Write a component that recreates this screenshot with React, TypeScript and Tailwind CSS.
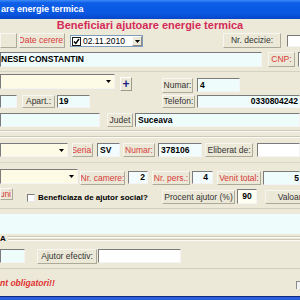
import React from "react";

const lblBase =
  "flex items-center justify-center border border-t-[#f7f6f0] border-l-[#f7f6f0] border-r-[#aeaa99] border-b-[#aeaa99] bg-[#ebe8d7] text-[8.5px] leading-none whitespace-nowrap overflow-hidden";
const inBase =
  "flex items-center border border-t-[#7b7b7b] border-l-[#7b7b7b] border-r-[#f4f4f4] border-b-[#f4f4f4] text-[8.5px] leading-none whitespace-nowrap overflow-hidden text-black";

function Lbl({ c, red, children }: { c: string; red?: boolean; children?: React.ReactNode }) {
  return <div className={`${lblBase} ${red ? "text-[#d83a3a]" : "text-[#333333]"} ${c}`}>{children}</div>;
}

function Inp({ c, children }: { c: string; children?: React.ReactNode }) {
  return <div className={`${inBase} ${c}`}>{children}</div>;
}

function Combo({ c }: { c: string }) {
  return (
    <div className={`${inBase} bg-[#fdfbe6] justify-end pr-[3px] ${c}`}>
      <svg width="5" height="3" viewBox="0 0 5 3">
        <path d="M0 0 L5 0 L2.5 3 Z" fill="#000" />
      </svg>
    </div>
  );
}

function Line({ c }: { c: string }) {
  return <div className={`h-[2px] border-t border-t-[#cdc9b8] border-b border-b-[#fbfaf5] ${c}`} />;
}

export default function App() {
  return (
    <div className="w-[300px] h-[300px] overflow-hidden bg-[#ece9d8] relative font-['Liberation_Sans',Arial,sans-serif] flex flex-col">
      {/* title bar */}
      <div className="h-[19px] shrink-0 flex items-center pl-[1px] bg-[linear-gradient(to_bottom,#3d8bf7_0%,#0e5ee8_15%,#0a58e2_70%,#0746c8_100%)]">
        <span className="text-white font-bold text-[9px] leading-none">are energie termica</span>
      </div>
      {/* header */}
      <div className="h-[13px] shrink-0 flex items-center justify-center">
        <span className="text-[#d42b58] font-bold text-[11px] leading-none">Beneficiari ajutoare energie termica</span>
      </div>

      {/* row 2 */}
      <div className="flex items-start h-[15px] mt-[1px] shrink-0 *:shrink-0">
        <Lbl c="w-[17px] h-[15px]" />
        <Lbl c="ml-[2px] w-[46px] h-[15px]" red>
          Date cerere:
        </Lbl>
        <div className="ml-[5px] mt-[2px] w-[73px] h-[12px] flex items-center border border-[#7f9db9] bg-white">
          <div className="ml-[1px] w-[9px] h-[9px] border border-[#1c1c1c] bg-white flex items-center justify-center">
            <svg width="7" height="7" viewBox="0 0 7 7">
              <path d="M1 3.5 L2.8 5.5 L6 1" stroke="#000" strokeWidth="1.4" fill="none" />
            </svg>
          </div>
          <span className="ml-[2px] text-[8.5px] leading-none text-black">02.11.2010</span>
          <div className="ml-auto w-[10px] h-[10px] bg-[#ece9d8] border border-t-white border-l-white border-r-[#8a8a8a] border-b-[#8a8a8a] flex items-center justify-center">
            <svg width="5" height="3" viewBox="0 0 5 3">
              <path d="M0 0 L5 0 L2.5 3 Z" fill="#000" />
            </svg>
          </div>
        </div>
        <Lbl c="ml-[80px] w-[58px] h-[15px]">Nr. decizie:</Lbl>
        <Inp c="ml-[6px] mt-[2px] w-[20px] h-[12px] bg-white" />
      </div>

      {/* row 3 */}
      <div className="flex items-start h-[15px] mt-[4px] shrink-0 *:shrink-0">
        <Inp c="w-[262px] h-[15px] bg-[#effcfc] font-bold">NESEI CONSTANTIN</Inp>
        <Lbl c="ml-[6px] w-[27px] h-[15px]" red>
          CNP:
        </Lbl>
        <Inp c="ml-[3px] w-[10px] h-[15px] bg-white" />
      </div>

      <div className="h-px mt-[4px] bg-[#d6d2c2] shrink-0" />

      {/* row 4 */}
      <div className="flex items-start h-[20px] mt-[1px] shrink-0 *:shrink-0">
        <Combo c="w-[115px] h-[15px] mt-[1px]" />
        <div className="ml-[5px] mt-[4px] w-[12px] h-[14px] flex items-center justify-center border border-t-white border-l-white border-r-[#9d9a8a] border-b-[#9d9a8a] text-[#1e1e8a] font-bold text-[12px] leading-none">
          +
        </div>
        <Lbl c="ml-[30px] mt-[5px] w-[31px] h-[15px]">Numar:</Lbl>
        <Inp c="ml-[4px] mt-[5px] w-[43px] h-[14px] bg-[#effcfc] font-bold pl-[2px]">4</Inp>
      </div>

      {/* row 5 */}
      <div className="flex items-start h-[13px] mt-[2px] shrink-0 *:shrink-0">
        <Inp c="w-[17px] h-[13px] bg-[#effcfc]" />
        <Lbl c="ml-[5px] w-[33px] h-[13px]">Apart.:</Lbl>
        <Inp c="ml-[2px] w-[33px] h-[13px] bg-[#effcfc] font-bold pl-[1px]">19</Inp>
        <Lbl c="ml-[72px] w-[33px] h-[13px]">Telefon:</Lbl>
        <Inp c="ml-[2px] w-[103px] h-[13px] bg-[#effcfc] font-bold justify-end pr-[1px]">0330804242</Inp>
      </div>

      {/* row 6 */}
      <div className="flex items-start h-[14px] mt-[5px] shrink-0 *:shrink-0">
        <Inp c="w-[100px] h-[14px] bg-[#effcfc]" />
        <Lbl c="ml-[7px] w-[26px] h-[14px]">Judet</Lbl>
        <Inp c="ml-[2px] w-[165px] h-[14px] bg-[#effcfc] font-bold pl-[2px]">Suceava</Inp>
      </div>

      <Line c="mt-[3px] shrink-0" />
      <Line c="mt-[4px] shrink-0" />

      {/* row 7 */}
      <div className="flex items-start h-[14px] mt-[5px] shrink-0 *:shrink-0">
        <Combo c="w-[68px] h-[14px]" />
        <Lbl c="ml-[4px] w-[21px] h-[14px]" red>
          Seria:
        </Lbl>
        <Inp c="ml-[4px] w-[23px] h-[14px] bg-[#f3fcfc] font-bold pl-[2px]">SV</Inp>
        <Lbl c="ml-[3px] w-[32px] h-[14px]" red>
          Numar:
        </Lbl>
        <Inp c="ml-[3px] w-[44px] h-[14px] bg-[#f3fcfc] font-bold pl-[2px]">378106</Inp>
        <Lbl c="ml-[3px] w-[48px] h-[14px]">Eliberat de:</Lbl>
        <Inp c="ml-[4px] w-[43px] h-[14px] bg-white" />
      </div>

      <div className="h-px mt-[5px] bg-[#dcd8c8] shrink-0" />

      {/* row 8 */}
      <div className="flex items-start h-[16px] mt-[6px] shrink-0 *:shrink-0">
        <Combo c="w-[78px] h-[15px]" />
        <Lbl c="ml-[2px] mt-[2px] w-[45px] h-[14px]" red>
          Nr. camere:
        </Lbl>
        <Inp c="ml-[3px] mt-[2px] w-[20px] h-[13px] bg-[#f3fcfc] font-bold justify-end pr-[2px]">2</Inp>
        <Lbl c="ml-[4px] mt-[2px] w-[38px] h-[14px]" red>
          Nr. pers.:
        </Lbl>
        <Inp c="ml-[2px] mt-[2px] w-[21px] h-[13px] bg-[#f3fcfc] font-bold justify-end pr-[4px]">4</Inp>
        <Lbl c="ml-[4px] mt-[2px] w-[44px] h-[14px]" red>
          Venit total:
        </Lbl>
        <Inp c="ml-[2px] mt-[2px] w-[37px] h-[14px] bg-[#effcfc] font-bold justify-end pr-0">5</Inp>
      </div>

      {/* row 9 */}
      <div className="flex items-start h-[16px] mt-[3px] shrink-0 *:shrink-0">
        <Lbl c="w-[13px] h-[12px] justify-end pr-[1px]" red>
          uni
        </Lbl>
        <div className="ml-[14px] mt-[6px] w-[8px] h-[8px] border border-t-[#7b7b7b] border-l-[#7b7b7b] border-r-[#e8e8e8] border-b-[#e8e8e8] bg-white" />
        <div className="ml-[3px] mt-[5px] w-[124px] h-[10px] flex items-center text-[8px] font-bold leading-none text-black whitespace-nowrap">
          Beneficiaza de ajutor social?
        </div>
        <Lbl c="mt-[2px] w-[73px] h-[14px]">Procent ajutor (%)</Lbl>
        <Inp c="ml-[2px] mt-[1px] w-[20px] h-[15px] bg-[#fffff2] font-bold justify-center">90</Inp>
        <Lbl c="ml-[8px] mt-[2px] w-[80px] h-[14px]">Valoare ajutor:</Lbl>
      </div>

      <div className="h-px mt-[4px] bg-[#d2cebe] shrink-0" />
      <div className="h-[20px] mt-[5px] bg-[#effcfc] shrink-0" />
      <Line c="mt-[2px] shrink-0" />

      {/* group box */}
      <div className="relative h-[2px] mt-[1px] shrink-0 border-t border-t-[#cdc9b8] border-b border-b-[#fbfaf5]">
        <span className="absolute left-0 top-[-5px] bg-[#ece9d8] pr-[2px] text-[8px] font-bold leading-none text-black">A</span>
      </div>

      {/* row 10 */}
      <div className="flex items-start h-[15px] mt-[8px] shrink-0 *:shrink-0">
        <Inp c="w-[25px] h-[14px] bg-[#effcfc]" />
        <Lbl c="ml-[12px] w-[60px] h-[15px]">Ajutor efectiv:</Lbl>
        <Inp c="ml-[1px] w-[83px] h-[14px] bg-white" />
      </div>

      <div className="h-px mt-[4px] bg-[#d2cebe] shrink-0" />

      {/* bottom */}
      <div className="flex items-start h-[20px] mt-[8px] shrink-0 *:shrink-0">
        <span className="mt-[2px] text-[#e03030] font-bold italic text-[8.5px] leading-none whitespace-nowrap">nt obligatori!!</span>
        <div className="ml-auto mt-[4px] w-[4px] h-[8px] border-t border-l border-[#8a8a8a] bg-[#f4f4f4]" />
      </div>

      <div className="h-[4px] mt-[-1px] border-t border-t-[#0d2a7c] bg-[#2a5fd9] shrink-0" />
    </div>
  );
}
